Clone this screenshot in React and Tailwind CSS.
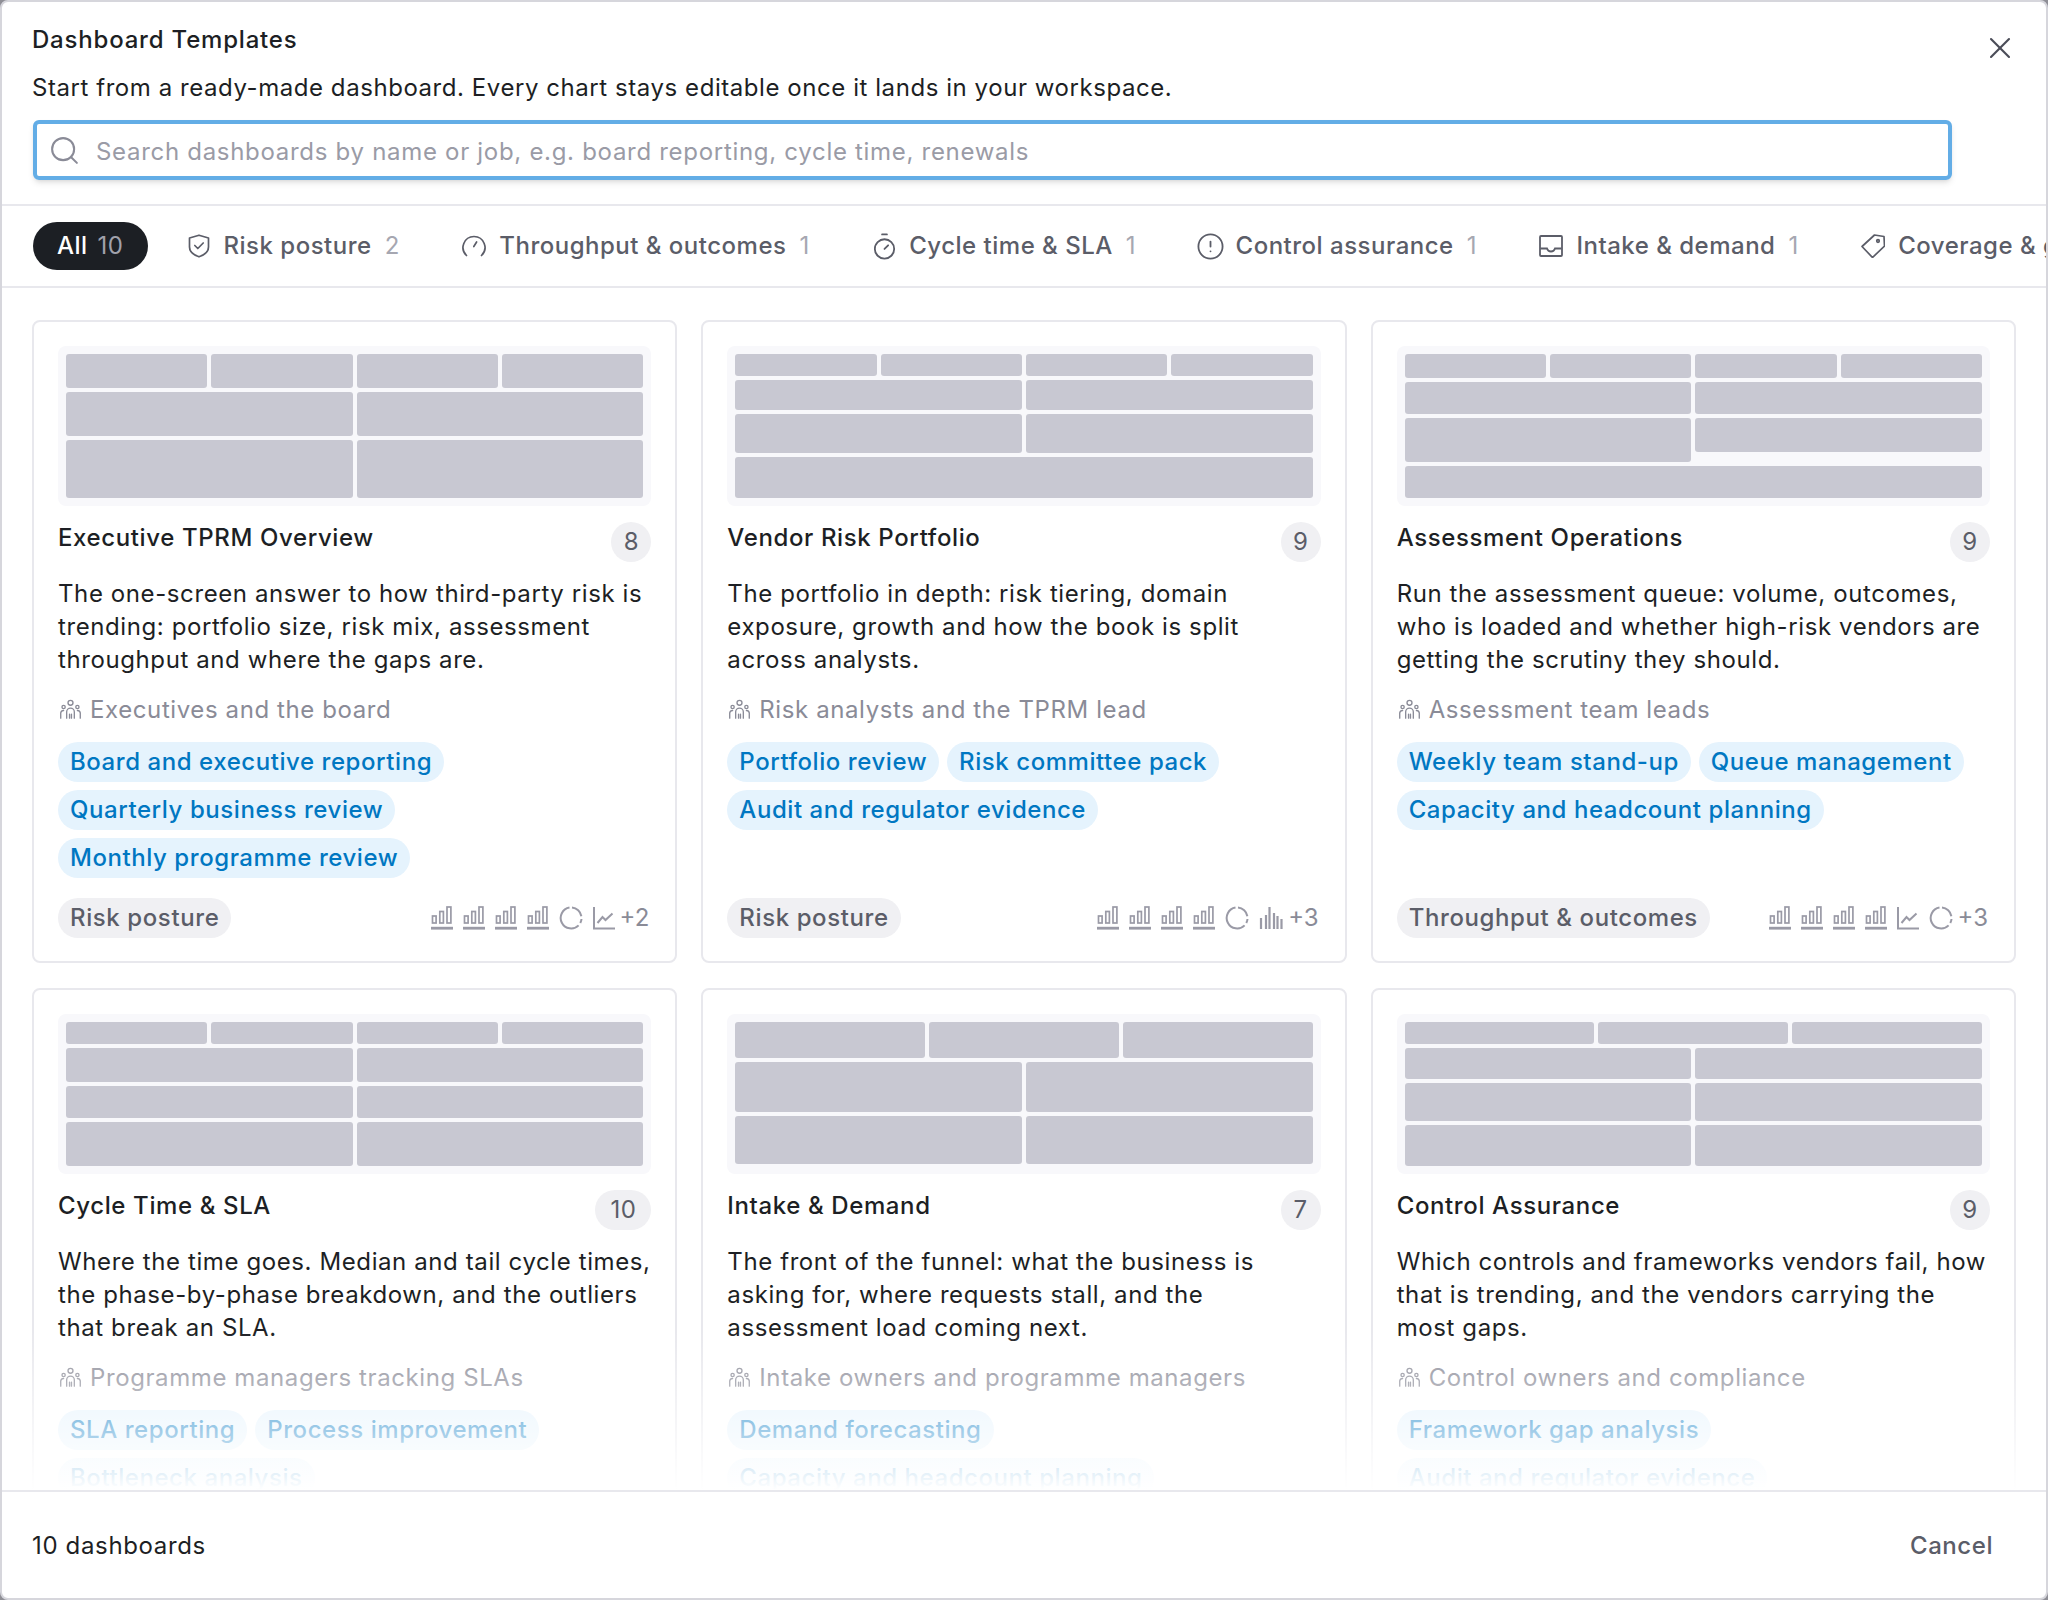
import React from 'react';
import { Search, X, Timer, CircleAlert } from 'lucide-react';

const ShieldIcon = ({ className }) => (
    <svg className={className} viewBox="0 0 24 24" fill="none" stroke="currentColor" strokeWidth="1.7" strokeLinejoin="round" strokeLinecap="round">
        <path d="M12 1.2l9.5 2.8v9c0 4.5-4.2 8-9.5 9.8-5.3-1.8-9.5-5.3-9.5-9.8V4z" />
        <path d="M7.8 11.5l3 3 5.4-5.5" />
    </svg>
);

const GaugeIcon = ({ className }) => (
    <svg className={className} viewBox="0 0 24 24" fill="none" stroke="currentColor" strokeWidth="1.7" strokeLinecap="round">
        <path d="M4.5 21.5A11 11 0 0 1 12 2.5a11 11 0 0 1 7.5 19" />
        <path d="M11.8 12.5l2.8-4.5" />
    </svg>
);

const TimerIcon = () => (
    <Timer className="w-[29px] h-[29px] -ml-[2.5px] mr-[10.5px] shrink-0" strokeWidth={1.5} />
);

const AlertIcon = () => (
    <CircleAlert className="w-[29px] h-[29px] -ml-[2.5px] mr-[10.5px] shrink-0" strokeWidth={1.5} />
);

const InboxIcon = ({ className }) => (
    <svg className={className} viewBox="0 0 24 24" fill="none" stroke="currentColor" strokeWidth="1.8">
        <rect x="1" y="2" width="22" height="20" rx="1" />
        <path d="M1.5 14.5h6.5c.6 2 2 3 4 3s3.4-1 4-3h6.5" />
    </svg>
);

const TagIcon = ({ className }) => (
    <svg className={className} viewBox="0 0 24 24" fill="none" stroke="currentColor" strokeWidth="1.7" strokeLinejoin="round">
        <path d="M13.5 1l9.5 1.5 .5 9.5L11.5 23.5 1 12.5z" />
        <circle cx="17" cy="7" r="1.3" />
    </svg>
);

const UsersIcon = ({ className }) => (
    <svg className={className} viewBox="0 0 24 24" fill="none" stroke="currentColor" strokeWidth="1.4" strokeLinecap="round">
        <circle cx="12" cy="5" r="2.6" />
        <circle cx="4.8" cy="9.4" r="1.7" />
        <circle cx="19.2" cy="9.4" r="1.7" />
        <path d="M8 21v-6.5a4 4 0 0 1 8 0V21" />
        <path d="M11 21v-4M13 21v-4" />
        <path d="M1.8 21v-5.5a3 3 0 0 1 3-2.5M22.2 21v-5.5a3 3 0 0 0-3-2.5" />
    </svg>
);

const BarIcon = () => (
    <svg className="w-[22px] h-[24px] shrink-0 text-[#9a9aa6]" viewBox="0 0 22 24" fill="none" stroke="currentColor">
        <rect x="1.5" y="10" width="3.6" height="7" strokeWidth="1.7" />
        <rect x="8.8" y="5.5" width="3.6" height="11.5" strokeWidth="1.7" />
        <rect x="16" y="1" width="3.9" height="16" strokeWidth="1.7" />
        <path d="M0 22.2h22" strokeWidth="2.8" />
    </svg>
);

const DonutIcon = () => (
    <svg className="w-[24px] h-[24px] shrink-0 text-[#9a9aa6]" viewBox="0 0 24 24" fill="none" stroke="currentColor" strokeWidth="2">
        <path d="M13 1.6a10.5 10.5 0 0 1 9.4 8.6" />
        <path d="M22.5 13a10.5 10.5 0 0 1-1.2 4" />
        <path d="M19.6 19.4A10.5 10.5 0 1 1 10.5 1.6" />
    </svg>
);

const LineIcon = () => (
    <svg className="w-[22px] h-[24px] shrink-0 text-[#9a9aa6]" viewBox="0 0 22 24" fill="none" stroke="currentColor" strokeWidth="2">
        <path d="M1 1v21.5h21" />
        <path d="M4.5 17l5-6 3 3 7-6.5" />
    </svg>
);

const HistIcon = () => (
    <svg className="w-[24px] h-[24px] shrink-0 text-[#9a9aa6]" viewBox="0 0 24 24" fill="none" stroke="currentColor" strokeWidth="2.2">
        <path d="M2 23V12M7 23V9M10.5 23V1M15 23V7M18.5 23V10M22.5 23V13" />
    </svg>
);

const filters = [
    { label: 'Risk posture', count: 2, Icon: ShieldIcon },
    { label: 'Throughput & outcomes', count: 1, Icon: GaugeIcon },
    { label: 'Cycle time & SLA', count: 1, Icon: TimerIcon },
    { label: 'Control assurance', count: 1, Icon: AlertIcon },
    { label: 'Intake & demand', count: 1, Icon: InboxIcon },
    { label: 'Coverage & gaps', count: 1, Icon: TagIcon },
];

const four = [1, 2, 3, 4];
const three = [1, 2, 3];
const two = [1, 2];

const cards = [
    {
        title: 'Executive TPRM Overview',
        count: 8,
        text: 'The one-screen answer to how third-party risk is trending: portfolio size, risk mix, assessment throughput and where the gaps are.',
        audience: 'Executives and the board',
        tags: ['Board and executive reporting', 'Quarterly business review', 'Monthly programme review'],
        category: 'Risk posture',
        icons: [BarIcon, BarIcon, BarIcon, BarIcon, DonutIcon, LineIcon],
        more: 2,
        rows: [
            { h: 'h-[34px]', cells: four },
            { h: 'h-[44px]', cells: two },
            { h: 'h-[58px]', cells: two },
        ],
    },
    {
        title: 'Vendor Risk Portfolio',
        count: 9,
        text: 'The portfolio in depth: risk tiering, domain exposure, growth and how the book is split across analysts.',
        audience: 'Risk analysts and the TPRM lead',
        tags: ['Portfolio review', 'Risk committee pack', 'Audit and regulator evidence'],
        category: 'Risk posture',
        icons: [BarIcon, BarIcon, BarIcon, BarIcon, DonutIcon, HistIcon],
        more: 3,
        rows: [
            { h: 'h-[22px]', cells: four },
            { h: 'h-[30px]', cells: two },
            { h: 'h-[39px]', cells: two },
            { h: 'h-[41px]', cells: [1] },
        ],
    },
    {
        title: 'Assessment Operations',
        count: 9,
        text: 'Run the assessment queue: volume, outcomes, who is loaded and whether high-risk vendors are getting the scrutiny they should.',
        audience: 'Assessment team leads',
        tags: ['Weekly team stand-up', 'Queue management', 'Capacity and headcount planning'],
        category: 'Throughput & outcomes',
        icons: [BarIcon, BarIcon, BarIcon, BarIcon, LineIcon, DonutIcon],
        more: 3,
        rows: [
            { h: 'h-[24px]', cells: four },
            { h: 'h-[32px]', cells: two },
            { h: 'h-[44px]', cells: two, short: true },
            { h: 'h-[32px]', cells: [1] },
        ],
    },
    {
        title: 'Cycle Time & SLA',
        count: 10,
        text: 'Where the time goes. Median and tail cycle times, the phase-by-phase breakdown, and the outliers that break an SLA.',
        audience: 'Programme managers tracking SLAs',
        tags: ['SLA reporting', 'Process improvement', 'Bottleneck analysis'],
        category: 'Cycle time & SLA',
        icons: [BarIcon, BarIcon, BarIcon, BarIcon, LineIcon, DonutIcon],
        more: 4,
        rows: [
            { h: 'h-[22px]', cells: four },
            { h: 'h-[34px]', cells: two },
            { h: 'h-[32px]', cells: two },
            { h: 'h-[44px]', cells: two },
        ],
    },
    {
        title: 'Intake & Demand',
        count: 7,
        text: 'The front of the funnel: what the business is asking for, where requests stall, and the assessment load coming next.',
        audience: 'Intake owners and programme managers',
        tags: ['Demand forecasting', 'Capacity and headcount planning'],
        category: 'Intake & demand',
        icons: [BarIcon, BarIcon, BarIcon, LineIcon],
        more: 3,
        rows: [
            { h: 'h-[36px]', cells: three },
            { h: 'h-[50px]', cells: two },
            { h: 'h-[48px]', cells: two },
        ],
    },
    {
        title: 'Control Assurance',
        count: 9,
        text: 'Which controls and frameworks vendors fail, how that is trending, and the vendors carrying the most gaps.',
        audience: 'Control owners and compliance',
        tags: ['Framework gap analysis', 'Audit and regulator evidence'],
        category: 'Control assurance',
        icons: [BarIcon, BarIcon, BarIcon, LineIcon],
        more: 5,
        rows: [
            { h: 'h-[22px]', cells: three },
            { h: 'h-[31px]', cells: two },
            { h: 'h-[38px]', cells: two },
            { h: 'h-[41px]', cells: two },
        ],
    },
];

const Thumb = ({ rows }) => (
    <div className="h-[160px] rounded-lg bg-[#f8f8fb] p-2 flex flex-col gap-1">
        {rows.map((row, i) => (
            <div key={i} className={`${row.h} flex gap-1 items-start`}>
                {row.cells.map((c, j) => (
                    <div
                        key={c}
                        className={`flex-1 rounded-[3px] bg-[#c8c8d2] ${row.short && j === 1 ? 'h-[34px]' : 'h-full'}`}
                    />
                ))}
            </div>
        ))}
    </div>
);

const Card = ({ card }) => (
    <div className="h-[643px] rounded-lg border-2 border-[#e8e8ed] bg-white pt-[24px] px-[24px] flex flex-col">
        <Thumb rows={card.rows} />
        <div className="mt-4 flex items-start justify-between">
            <div className="text-[24px] leading-[32px] font-[450] text-[#1d1f24] tracking-[0.62px]">{card.title}</div>
            <div className={`h-[40px] rounded-full bg-[#f0f0f3] text-[#5b5d68] text-[24px] leading-[40px] text-center tracking-[0.5px] ${card.count > 9 ? 'w-[56px]' : 'w-[40px]'}`}>{card.count}</div>
        </div>
        <p className="mt-[15px] text-[24px] leading-[33.2px] text-[#1d1f24] tracking-[0.6px]">{card.text}</p>
        <div className="mt-[17px] flex items-center gap-2 text-[#8a8b97] text-[24px] leading-[32px] tracking-[0.6px]">
            <UsersIcon className="w-[23px] h-[23px] ml-px shrink-0" />
            <span>{card.audience}</span>
        </div>
        <div className="mt-4 h-[136px] flex flex-wrap content-start gap-2">
            {card.tags.map((tag) => (
                <span key={tag} className="h-[40px] px-3 rounded-full bg-[#e5f3fd] text-[#0077c2] text-[24px] font-[450] leading-[40px] tracking-[0.56px]">{tag}</span>
            ))}
        </div>
        <div className="mt-5 flex items-center justify-between">
            <span className="h-[40px] px-3 rounded-full bg-[#f0f0f3] text-[#5b5d68] text-[24px] font-[450] leading-[40px] tracking-[0.6px]">{card.category}</span>
            <div className="flex items-center gap-[10px] pr-0.5 text-[#8a8b97] text-[24px] leading-[32px]">
                {card.icons.map((Icon, i) => <Icon key={i} />)}
                <span className="-ml-[5px]">+{card.more}</span>
            </div>
        </div>
    </div>
);

const App = () => {
    return (
        <div className="w-[2048px] h-[1600px] bg-[#8f8f96] font-['Inter',sans-serif]">
            <div className="h-full rounded-lg border-2 border-[#d6d6dc] bg-white flex flex-col overflow-hidden">
                {/* Header */}
                <header className="relative h-[204px] shrink-0 border-b-2 border-[#e8e8ed] px-[30px]">
                    <h2 className="pt-[22px] text-[24px] leading-[32px] font-[450] text-[#1d1f24] tracking-[0.8px]">Dashboard Templates</h2>
                    <p className="mt-4 text-[24px] leading-[32px] text-[#1d1f24] tracking-[0.56px]">Start from a ready-made dashboard. Every chart stays editable once it lands in your workspace.</p>
                    <div className="mt-[16px] ml-px w-[1919px] h-[60px] rounded-md border-4 border-[#63ade6] flex items-center gap-[15px] px-[11px] shadow-md">
                        <Search className="w-[33px] h-[33px] shrink-0 text-[#8a8b97]" strokeWidth={1.5} />
                        <span className="mt-[3px] text-[24px] text-[#9a9ba6] tracking-[0.7px]">Search dashboards by name or job, e.g. board reporting, cycle time, renewals</span>
                    </div>
                    <button className="absolute right-[28px] top-[28px] text-[#4a4c57]">
                        <X className="w-[36px] h-[36px]" strokeWidth={1.4} />
                    </button>
                </header>

                {/* Filters */}
                <nav className="h-[82px] shrink-0 border-b-2 border-[#e8e8ed] px-[31px] flex items-center gap-[15px] overflow-hidden whitespace-nowrap">
                    <div className="h-[48px] px-6 rounded-full bg-[#1c1f24] text-white text-[24px] leading-[48px] flex items-center gap-[10px] shrink-0 font-[450] tracking-[0.5px]">
                        All <span className="text-[#a0a1ab] font-normal">10</span>
                    </div>
                    {filters.map(({ label, count, Icon }) => (
                        <div key={label} className="h-[48px] px-6 flex items-center shrink-0 text-[24px] tracking-[0.5px] text-[#5b5d68] font-[450]">
                            <Icon className="w-[24px] h-[24px] mr-[13px] shrink-0" />
                            <span>{label}</span>
                            <span className="ml-[13px] text-[#a6a7b1] font-normal tracking-normal">{count}</span>
                        </div>
                    ))}
                </nav>

                {/* Card grid */}
                <main className="relative flex-1 overflow-hidden">
                    <div className="px-[30px] pt-[32px] grid grid-cols-3 gap-x-6 gap-y-[25px]">
                        {cards.map((card) => <Card key={card.title} card={card} />)}
                    </div>
                    <div className="absolute inset-x-0 bottom-0 h-[160px] bg-gradient-to-b from-white/0 to-white" />
                </main>

                {/* Footer */}
                <footer className="h-[108px] shrink-0 border-t-2 border-[#e8e8ed] pt-px px-[30px] flex items-center justify-between">
                    <span className="text-[24px] text-[#1d1f24] tracking-[0.65px]">10 dashboards</span>
                    <button className="px-6 h-[48px] -mr-[1px] text-[24px] font-[450] text-[#5b5d68] tracking-[0.55px]">Cancel</button>
                </footer>
            </div>
        </div>
    );
};

export default App;
